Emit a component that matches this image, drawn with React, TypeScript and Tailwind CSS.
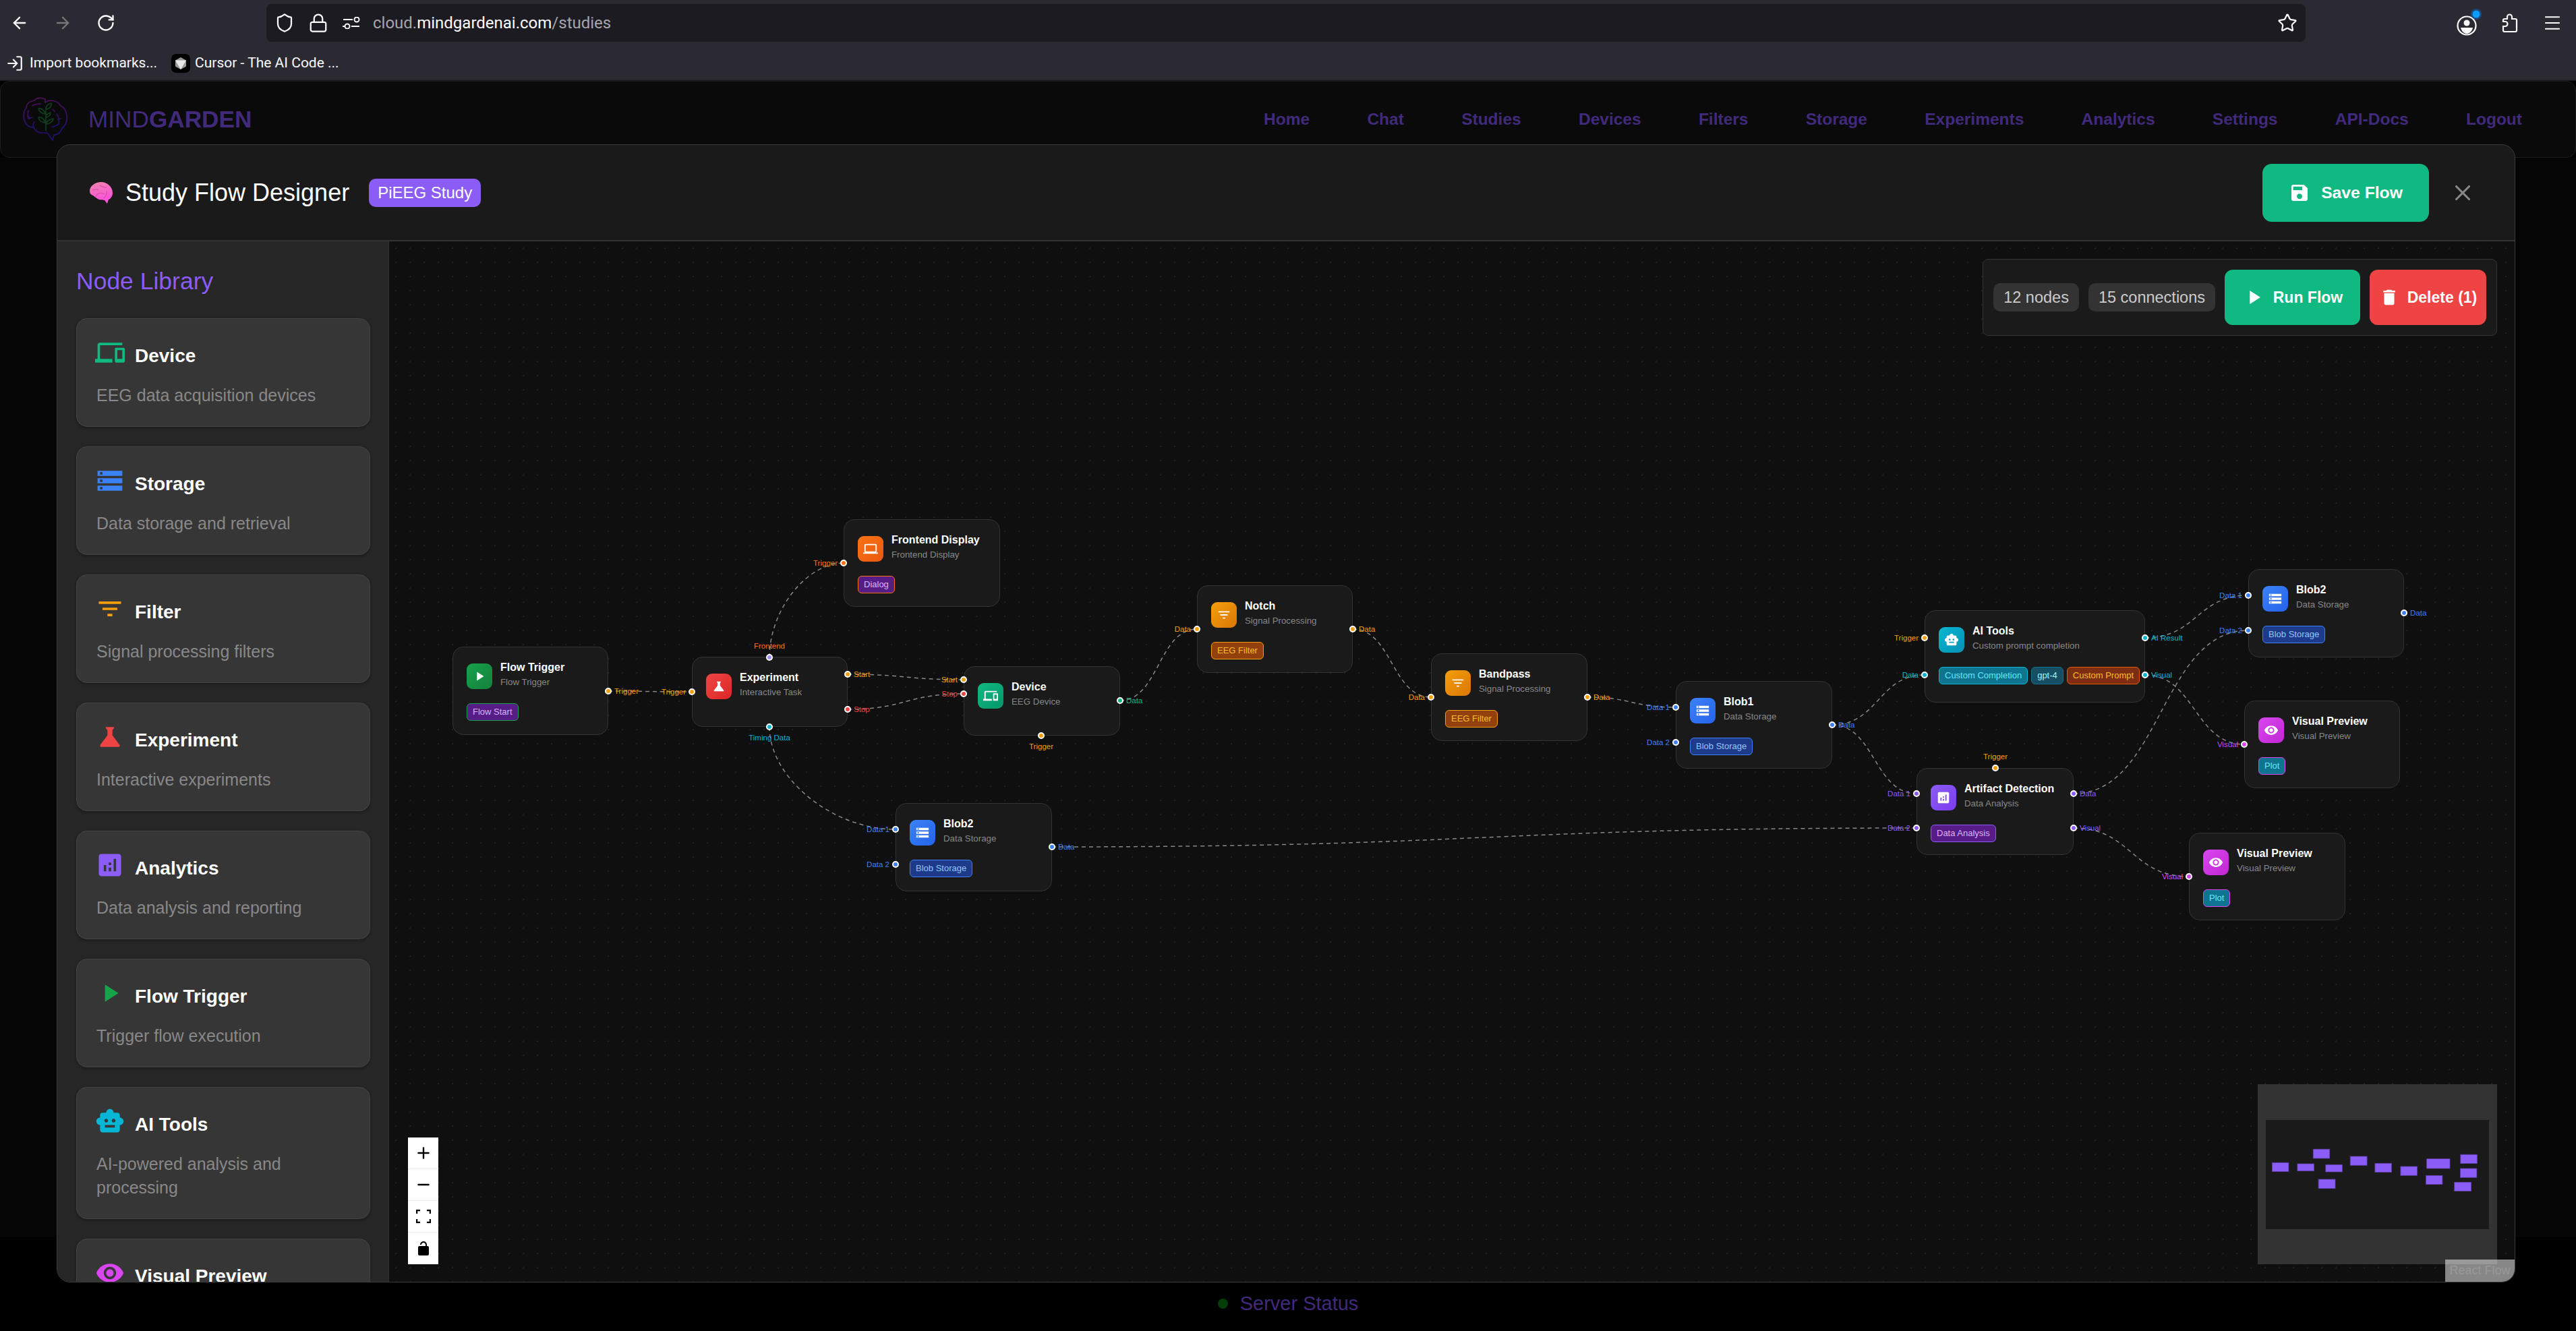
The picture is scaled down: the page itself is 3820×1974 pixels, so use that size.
import { ArrowLeft, ArrowRight, RotateCw, Shield, Lock, Star, Menu, LogIn, X, Plus, Minus } from 'lucide-react'
import {
    MdDevices, MdStorage, MdFilterList, MdScience, MdAnalytics, MdPlayArrow,
    MdSmartToy, MdVisibility, MdComputer, MdSave, MdDelete,
} from 'react-icons/md'
import type { IconType } from 'react-icons'

// page coordinates of the flow canvas
const OX = 577
const OY = 358

type Side = 'left' | 'right' | 'top' | 'bottom'
type Handle = { x: number; y: number; side: Side; label: string; text: string; fill: string }

const ORANGE = 'text-[#f59e0b]'
const BLUE = 'text-[#3b82f6]'
const CYAN = 'text-[#06b6d4]'
const PURPLE = 'text-[#8b5cf6]'
const PINK = 'text-[#d946ef]'

const handles: Record<string, Handle> = {
    ftOut: { x: 902, y: 1025, side: 'right', label: 'Trigger', text: ORANGE, fill: 'bg-[#f59e0b]' },
    expIn: { x: 1026, y: 1026, side: 'left', label: 'Trigger', text: ORANGE, fill: 'bg-[#f59e0b]' },
    expTop: { x: 1141, y: 975, side: 'top', label: 'Frontend', text: 'text-[#f97316]', fill: 'bg-[#a78bfa]' },
    expStart: { x: 1257, y: 1000, side: 'right', label: 'Start', text: ORANGE, fill: 'bg-[#f59e0b]' },
    expStop: { x: 1257, y: 1052, side: 'right', label: 'Stop', text: 'text-[#ef4444]', fill: 'bg-[#ef4444]' },
    expBottom: { x: 1141, y: 1078, side: 'bottom', label: 'Timing Data', text: CYAN, fill: 'bg-[#06b6d4]' },
    feIn: { x: 1251, y: 835, side: 'left', label: 'Trigger', text: 'text-[#f97316]', fill: 'bg-[#f97316]' },
    devStart: { x: 1429, y: 1008, side: 'left', label: 'Start', text: ORANGE, fill: 'bg-[#f59e0b]' },
    devStop: { x: 1429, y: 1029, side: 'left', label: 'Stop', text: 'text-[#ef4444]', fill: 'bg-[#ef4444]' },
    devOut: { x: 1661, y: 1039, side: 'right', label: 'Data', text: 'text-[#10b981]', fill: 'bg-[#10b981]' },
    devTrig: { x: 1544, y: 1091, side: 'bottom', label: 'Trigger', text: ORANGE, fill: 'bg-[#f59e0b]' },
    b2In1: { x: 1328, y: 1230, side: 'left', label: 'Data 1', text: BLUE, fill: 'bg-[#3b82f6]' },
    b2In2: { x: 1328, y: 1282, side: 'left', label: 'Data 2', text: BLUE, fill: 'bg-[#3b82f6]' },
    b2Out: { x: 1560, y: 1256, side: 'right', label: 'Data', text: BLUE, fill: 'bg-[#3b82f6]' },
    notchIn: { x: 1775, y: 933, side: 'left', label: 'Data', text: ORANGE, fill: 'bg-[#f59e0b]' },
    notchOut: { x: 2006, y: 933, side: 'right', label: 'Data', text: ORANGE, fill: 'bg-[#f59e0b]' },
    bandIn: { x: 2122, y: 1034, side: 'left', label: 'Data', text: ORANGE, fill: 'bg-[#f59e0b]' },
    bandOut: { x: 2354, y: 1034, side: 'right', label: 'Data', text: ORANGE, fill: 'bg-[#f59e0b]' },
    b1In1: { x: 2485, y: 1049, side: 'left', label: 'Data 1', text: BLUE, fill: 'bg-[#3b82f6]' },
    b1In2: { x: 2485, y: 1101, side: 'left', label: 'Data 2', text: BLUE, fill: 'bg-[#3b82f6]' },
    b1Out: { x: 2717, y: 1075, side: 'right', label: 'Data', text: BLUE, fill: 'bg-[#3b82f6]' },
    aiTrig: { x: 2854, y: 946, side: 'left', label: 'Trigger', text: ORANGE, fill: 'bg-[#f59e0b]' },
    aiIn: { x: 2854, y: 1001, side: 'left', label: 'Data', text: CYAN, fill: 'bg-[#06b6d4]' },
    aiOut: { x: 3181, y: 946, side: 'right', label: 'AI Result', text: CYAN, fill: 'bg-[#06b6d4]' },
    aiVis: { x: 3181, y: 1001, side: 'right', label: 'Visual', text: CYAN, fill: 'bg-[#06b6d4]' },
    artTrig: { x: 2959, y: 1139, side: 'top', label: 'Trigger', text: ORANGE, fill: 'bg-[#f59e0b]' },
    artIn1: { x: 2842, y: 1177, side: 'left', label: 'Data 1', text: PURPLE, fill: 'bg-[#8b5cf6]' },
    artIn2: { x: 2842, y: 1228, side: 'left', label: 'Data 2', text: PURPLE, fill: 'bg-[#8b5cf6]' },
    artOut: { x: 3075, y: 1177, side: 'right', label: 'Data', text: PURPLE, fill: 'bg-[#8b5cf6]' },
    artVis: { x: 3075, y: 1228, side: 'right', label: 'Visual', text: PURPLE, fill: 'bg-[#8b5cf6]' },
    b3In1: { x: 3334, y: 883, side: 'left', label: 'Data 1', text: BLUE, fill: 'bg-[#3b82f6]' },
    b3In2: { x: 3334, y: 935, side: 'left', label: 'Data 2', text: BLUE, fill: 'bg-[#3b82f6]' },
    b3Out: { x: 3565, y: 909, side: 'right', label: 'Data', text: BLUE, fill: 'bg-[#3b82f6]' },
    vp1In: { x: 3328, y: 1104, side: 'left', label: 'Visual', text: PINK, fill: 'bg-[#d946ef]' },
    vp2In: { x: 3246, y: 1300, side: 'left', label: 'Visual', text: PINK, fill: 'bg-[#d946ef]' },
}

const edges: [string, string][] = [
    ['ftOut', 'expIn'],
    ['expTop', 'feIn'],
    ['expStart', 'devStart'],
    ['expStop', 'devStop'],
    ['expBottom', 'b2In1'],
    ['b2Out', 'artIn2'],
    ['devOut', 'notchIn'],
    ['notchOut', 'bandIn'],
    ['bandOut', 'b1In1'],
    ['b1Out', 'aiIn'],
    ['b1Out', 'artIn1'],
    ['aiOut', 'b3In1'],
    ['artOut', 'b3In2'],
    ['aiVis', 'vp1In'],
    ['artVis', 'vp2In'],
]

const handleLabelClass: Record<Side, string> = {
    left: 'right-[9px] top-1/2 -translate-y-1/2',
    right: 'left-[9px] top-1/2 -translate-y-1/2',
    top: 'bottom-[10px] left-1/2 -translate-x-1/2',
    bottom: 'top-[9px] left-1/2 -translate-x-1/2',
}

// same offset rule as a bezier edge in react flow
function control(h: Handle, o: Handle): [number, number] {
    const off = (d: number) => (d >= 0 ? 0.5 * d : 0.25 * 25 * Math.sqrt(-d))
    if (h.side === 'left') return [h.x - off(h.x - o.x), h.y]
    if (h.side === 'right') return [h.x + off(o.x - h.x), h.y]
    if (h.side === 'top') return [h.x, h.y - off(h.y - o.y)]
    return [h.x, h.y + off(o.y - h.y)]
}

function edgePath(a: Handle, b: Handle) {
    const [c1x, c1y] = control(a, b)
    const [c2x, c2y] = control(b, a)
    return `M${a.x - OX},${a.y - OY} C${c1x - OX},${c1y - OY} ${c2x - OX},${c2y - OY} ${b.x - OX},${b.y - OY}`
}

type Tag = { label: string; cls: string }
type FlowNode = {
    x: number; y: number; w: number; h: number
    title: string; sub: string; icon: IconType; grad: string; tags: Tag[]
}

const GRAD = {
    trigger: 'from-[#16a34a] to-[#15803d]',
    experiment: 'from-[#ef4444] to-[#dc2626]',
    device: 'from-[#10b981] to-[#059669]',
    filter: 'from-[#f59e0b] to-[#d97706]',
    storage: 'from-[#3b82f6] to-[#2563eb]',
    ai: 'from-[#06b6d4] to-[#0891b2]',
    analytics: 'from-[#8b5cf6] to-[#7c3aed]',
    visual: 'from-[#d946ef] to-[#c026d3]',
    frontend: 'from-[#f97316] to-[#ea580c]',
}

const blobTag = { label: 'Blob Storage', cls: 'bg-[#1e3a8a] text-[#93c5fd] border-[#3b82f6]' }
const eegTag = { label: 'EEG Filter', cls: 'bg-[#92400e] text-[#fbbf24] border-[#f59e0b]' }
const plotTag = { label: 'Plot', cls: 'bg-[#0e7490] text-[#67e8f9] border-[#d946ef]' }

const nodes: FlowNode[] = [
    { x: 671, y: 959, w: 231, h: 131, title: 'Flow Trigger', sub: 'Flow Trigger', icon: MdPlayArrow, grad: GRAD.trigger, tags: [{ label: 'Flow Start', cls: 'bg-[#581c87] text-[#d8b4fe] border-[#16a34a]' }] },
    { x: 1026, y: 974, w: 231, h: 104, title: 'Experiment', sub: 'Interactive Task', icon: MdScience, grad: GRAD.experiment, tags: [] },
    { x: 1251, y: 770, w: 232, h: 130, title: 'Frontend Display', sub: 'Frontend Display', icon: MdComputer, grad: GRAD.frontend, tags: [{ label: 'Dialog', cls: 'bg-[#581c87] text-[#d8b4fe] border-[#f97316]' }] },
    { x: 1429, y: 988, w: 232, h: 103, title: 'Device', sub: 'EEG Device', icon: MdDevices, grad: GRAD.device, tags: [] },
    { x: 1328, y: 1191, w: 232, h: 131, title: 'Blob2', sub: 'Data Storage', icon: MdStorage, grad: GRAD.storage, tags: [blobTag] },
    { x: 1775, y: 868, w: 231, h: 130, title: 'Notch', sub: 'Signal Processing', icon: MdFilterList, grad: GRAD.filter, tags: [eegTag] },
    { x: 2122, y: 969, w: 232, h: 130, title: 'Bandpass', sub: 'Signal Processing', icon: MdFilterList, grad: GRAD.filter, tags: [eegTag] },
    { x: 2485, y: 1010, w: 232, h: 130, title: 'Blob1', sub: 'Data Storage', icon: MdStorage, grad: GRAD.storage, tags: [blobTag] },
    {
        x: 2854, y: 905, w: 327, h: 137, title: 'AI Tools', sub: 'Custom prompt completion', icon: MdSmartToy, grad: GRAD.ai,
        tags: [
            { label: 'Custom Completion', cls: 'bg-[#0e7490] text-[#67e8f9] border-[#06b6d4]' },
            { label: 'gpt-4', cls: 'bg-[#164e63] text-[#a5f3fc] border-[#0e7490]' },
            { label: 'Custom Prompt', cls: 'bg-[#7c2d12] text-[#fbbf24] border-[#ea580c]' },
        ],
    },
    { x: 2842, y: 1139, w: 233, h: 129, title: 'Artifact Detection', sub: 'Data Analysis', icon: MdAnalytics, grad: GRAD.analytics, tags: [{ label: 'Data Analysis', cls: 'bg-[#581c87] text-[#d8b4fe] border-[#8b5cf6]' }] },
    { x: 3334, y: 844, w: 231, h: 131, title: 'Blob2', sub: 'Data Storage', icon: MdStorage, grad: GRAD.storage, tags: [blobTag] },
    { x: 3328, y: 1039, w: 231, h: 130, title: 'Visual Preview', sub: 'Visual Preview', icon: MdVisibility, grad: GRAD.visual, tags: [plotTag] },
    { x: 3246, y: 1235, w: 232, h: 130, title: 'Visual Preview', sub: 'Visual Preview', icon: MdVisibility, grad: GRAD.visual, tags: [plotTag] },
]

const library: { title: string; desc?: string; icon: IconType; color: string }[] = [
    { title: 'Device', desc: 'EEG data acquisition devices', icon: MdDevices, color: 'text-[#10b981]' },
    { title: 'Storage', desc: 'Data storage and retrieval', icon: MdStorage, color: 'text-[#3b82f6]' },
    { title: 'Filter', desc: 'Signal processing filters', icon: MdFilterList, color: 'text-[#f59e0b]' },
    { title: 'Experiment', desc: 'Interactive experiments', icon: MdScience, color: 'text-[#ef4444]' },
    { title: 'Analytics', desc: 'Data analysis and reporting', icon: MdAnalytics, color: 'text-[#8b5cf6]' },
    { title: 'Flow Trigger', desc: 'Trigger flow execution', icon: MdPlayArrow, color: 'text-[#16a34a]' },
    { title: 'AI Tools', desc: 'AI-powered analysis and processing', icon: MdSmartToy, color: 'text-[#06b6d4]' },
    { title: 'Visual Preview', icon: MdVisibility, color: 'text-[#d946ef]' },
]

const navLinks = ['Home', 'Chat', 'Studies', 'Devices', 'Filters', 'Storage', 'Experiments', 'Analytics', 'Settings', 'API-Docs', 'Logout']

const miniNodes = [
    [9.4, 63.3, 24.5, 13.3], [46.9, 65, 24.5, 10.7], [70.2, 43.3, 24.5, 13.7], [88.8, 66.3, 24.5, 10.7],
    [78.1, 88, 24.9, 13.7], [125.2, 54, 24.9, 13.3], [161.9, 64.3, 24.5, 13.3], [199.9, 69, 24.5, 13.3],
    [238.6, 57.7, 34.4, 14.3], [288.8, 51.3, 24.5, 13.3], [288.4, 72, 24.5, 13.3], [237.4, 82.3, 24.5, 13.3],
    [279.7, 92.3, 24.9, 13.3],
]

function AccountIcon() {
    return (
        <svg width="40" height="40" viewBox="0 0 40 40" className="-mr-[11px]" fill="none">
            <circle cx="15" cy="25" r="13.500" stroke="#fbfbfe" strokeWidth="2.200" />
            <circle cx="15" cy="21" r="4.500" fill="#fbfbfe" />
            <path d="M6 28h18c-1 5-5 9-9 9s-8-4-9-9z" fill="#fbfbfe" />
            <circle cx="29" cy="8" r="8" fill="#0a84ff" opacity="0.350" />
            <circle cx="29" cy="8" r="5.500" fill="#0a9dff" />
        </svg>
    )
}

function BrowserChrome() {
    return (
        <div className="shrink-0 bg-[#2b2a33] h-[120px] border-b border-[#17161c]">
            <div className="flex items-center h-[68px]">
                <div className="flex items-center w-[395px] pl-[15px] gap-[36px] text-[#fbfbfe]">
                    <ArrowLeft size={28} strokeWidth={2} />
                    <ArrowRight size={28} strokeWidth={2} className="text-[#77767c]" />
                    <RotateCw size={28} strokeWidth={2} />
                </div>
                <div className="flex items-center w-[3024px] h-[56px] rounded-[8px] bg-[#1c1b22] pl-[12px] pr-[12px] text-[#fbfbfe]">
                    <Shield size={30} strokeWidth={1.8} />
                    <Lock size={30} strokeWidth={1.8} className="ml-[20px]" />
                    <svg width="28" height="18" viewBox="0 0 28 18" fill="none" stroke="currentColor" strokeWidth="2" className="ml-[20px]">
                        <path d="M2 4h14M1 14h3M14 14h12" />
                        <circle cx="22" cy="4" r="3.5" />
                        <circle cx="8" cy="14" r="3.5" />
                    </svg>
                    <span className="ml-[18px] text-[24px] font-['Roboto',sans-serif] text-[#a6a5ab]">
                        cloud.<span className="text-[#fbfbfe]">mindgardenai.com</span>/studies
                    </span>
                    <Star size={30} strokeWidth={1.8} className="ml-auto" />
                </div>
                <div className="flex items-center ml-[224px] -mt-[3px] text-[#fbfbfe]">
                    <AccountIcon />
                    <svg width="24" height="28" viewBox="0 0 24 28" fill="none" stroke="currentColor" strokeWidth="2.200" className="ml-[38px] mt-[3px]">
                        <path d="M4 27h16a2 2 0 0 0 2-2V10a2 2 0 0 0-2-2h-5V5a3.500 3.500 0 0 0-7 0v3H4a2 2 0 0 0-2 2v2h3a3.500 3.500 0 0 1 0 7H2v6a2 2 0 0 0 2 2z" />
                    </svg>
                    <Menu size={30} strokeWidth={1.7} className="ml-[36px] mt-[3px]" />
                </div>
            </div>
            <div className="flex items-center h-[51px] text-[21px] font-['Roboto',sans-serif] text-[#fbfbfe]">
                <LogIn size={26} strokeWidth={2} className="ml-[9px]" />
                <span className="ml-[9px]">Import bookmarks...</span>
                <svg width="28" height="28" viewBox="0 0 28 28" className="ml-[21px]">
                    <rect width="28" height="28" rx="7" fill="#000" />
                    <path d="M14 5l8 4.500v9l-8 4.500-8-4.500v-9z" fill="#9a9a9a" />
                    <path d="M6 9.500h16l-8 13.500z" fill="#e8e8e8" />
                </svg>
                <span className="ml-[7px]">Cursor - The AI Code ...</span>
            </div>
        </div>
    )
}

function LogoMark() {
    return (
        <svg width="66" height="66" viewBox="0 0 66 66" fill="none" strokeWidth="1.700" strokeLinecap="round" strokeLinejoin="round">
            <defs>
                <linearGradient id="logoStroke" x1="0" y1="0" x2="0" y2="1">
                    <stop offset="0" stopColor="#4f0f5e" />
                    <stop offset="1" stopColor="#1c0f75" />
                </linearGradient>
            </defs>
            <g stroke="url(#logoStroke)">
                <path d="M33 3C27 0 20 1 17 5 10 6 5 10 5 16 1 20 0 30 3 36c1 5 6 9 13 9 2 5 6 8 13 8h7l8 11 2-8c7 0 11-5 12-10 5-4 8-11 7-19-1-7-5-12-9-14-3-6-10-8-15-8-3 0-6 1-8 3z" />
                <path d="M14 13c4-3 8-3 12-3M8 20c-1 5-1 9 0 12l6-2M7 27l3 5M50 25c3 4 4 10 3 15-3 2-6 4-10 4M56 32l-4 1M17 37c-2 3-3 5-1 8M44 18l3 3" />
            </g>
            <g stroke="#0d3f20">
                <path d="M34 50V17" />
                <path d="M34 18c0-5 4-8 8-9 1 5-3 9-8 9zM33 25c-5 0-9-4-10-8 5-1 9 3 10 8zM34 30c0-4 3-6 7-7 0 4-3 7-7 7zM33 38c-5 0-9-3-10-8 5-1 9 3 10 8zM34 40c1-4 6-8 11-8-1 5-6 8-11 8z" />
            </g>
        </svg>
    )
}

function BackgroundPage() {
    return (
        <div className="flex flex-col h-[1854px]">
            <nav className="flex items-center justify-between shrink-0 h-[114px] pl-[33px] pr-[79px] rounded-[14px] border border-[#1c1c1c] bg-[#0a0a0a] text-[#412a7c]">
                <div className="flex items-center gap-[31px]">
                    <LogoMark />
                    <div className="text-[35.200px]">
                        MIND<span className="font-bold">GARDEN</span>
                    </div>
                </div>
                <div className="flex items-center gap-[85.300px] text-[24.500px] font-bold">
                    {navLinks.map(l => <span key={l}>{l}</span>)}
                </div>
            </nav>
            <main className="flex-1 bg-[#050505]" />
            <footer className="flex items-end justify-center shrink-0 h-[139px] pb-[24px] bg-black text-[#412a7c] text-[29px] leading-[34px]">
                <div className="flex items-center gap-[18px]">
                    <span className="w-[15px] h-[15px] rounded-full bg-[#033d0a]" />
                    <span>Server Status</span>
                </div>
            </footer>
        </div>
    )
}

function LibraryCard({ item }: { item: (typeof library)[number] }) {
    const Icon = item.icon
    return (
        <div className="shrink-0 rounded-[16px] border border-[#444] bg-[#363636] px-[29px] pt-[29px] pb-[28px] shadow-[0_2px_4px_rgba(0,0,0,0.3)]">
            <div className="flex items-center h-[52px] gap-[15px]">
                <Icon size={44} className={`-ml-[2px] -mt-[10px] ${item.color}`} />
                <span className="text-[28px] font-bold text-white">{item.title}</span>
            </div>
            {item.desc && <p className="mt-[15px] text-[25px] leading-[35px] text-[#888]">{item.desc}</p>}
        </div>
    )
}

function Sidebar() {
    return (
        <aside className="shrink-0 w-[492px] overflow-hidden border-r border-[#333] bg-[#262626] pl-[28px] pr-[27px] pt-[38px]">
            <h2 className="text-[35.500px] leading-[42px] text-[#8b5cf6] mb-[34px]">Node Library</h2>
            <div className="flex flex-col gap-[29px]">
                {library.map(item => <LibraryCard key={item.title} item={item} />)}
            </div>
        </aside>
    )
}

function NodeCard({ node }: { node: FlowNode }) {
    const Icon = node.icon
    return (
        <div
            className="absolute rounded-[16px] border border-[#333] bg-[#1a1a1a] px-5 pt-6"
            style={{ left: node.x - OX, top: node.y - OY, width: node.w, height: node.h }}
        >
            <div className="flex items-start gap-3">
                <div className={`flex items-center justify-center shrink-0 w-[38px] h-[38px] rounded-[9px] bg-linear-to-br text-white ${node.grad}`}>
                    <Icon size={22} />
                </div>
                <div className="whitespace-nowrap -mt-[4px]">
                    <div className="text-[16px] leading-[20px] font-bold text-white">{node.title}</div>
                    <div className="mt-[3px] text-[13.300px] leading-[18px] text-[#888]">{node.sub}</div>
                </div>
            </div>
            {node.tags.length > 0 && (
                <div className="flex gap-[5px] mt-[21px]">
                    {node.tags.map(t => (
                        <span key={t.label} className={`h-[26px] rounded-[6px] border px-2 text-[13px] leading-[24px] whitespace-nowrap ${t.cls}`}>
                            {t.label}
                        </span>
                    ))}
                </div>
            )}
        </div>
    )
}

function HandleDot({ h }: { h: Handle }) {
    return (
        <div className="absolute w-0 h-0" style={{ left: h.x - OX, top: h.y - OY }}>
            <span className={`absolute -left-[5px] -top-[5px] w-[10px] h-[10px] rounded-full border-2 border-white ${h.fill}`} />
            <span className={`absolute text-[11.500px] leading-[14px] whitespace-nowrap ${h.text} ${handleLabelClass[h.side]}`}>{h.label}</span>
        </div>
    )
}

function Toolbar() {
    return (
        <div className="absolute right-[26px] top-[26px] flex items-center gap-[14px] rounded-[8px] border border-[#333] bg-[#1a1a1a] p-[15px]">
            <span className="rounded-[10px] bg-[#333] px-[15px] h-[42px] leading-[42px] text-[23.500px] text-[#ccc]">12 nodes</span>
            <span className="rounded-[10px] bg-[#333] px-[15px] h-[42px] leading-[42px] text-[23.500px] text-[#ccc]">15 connections</span>
            <button className="flex items-center justify-center gap-[12px] w-[201px] h-[82px] rounded-[12px] bg-[#10b981] text-[23px] font-bold text-white">
                <MdPlayArrow size={34} />
                Run Flow
            </button>
            <button className="flex items-center justify-center gap-[12px] w-[173px] h-[82px] rounded-[12px] bg-[#ef4444] text-[23px] font-bold text-white">
                <MdDelete size={30} />
                Delete (1)
            </button>
        </div>
    )
}

function ZoomControls() {
    return (
        <div className="absolute left-[28px] bottom-[26px] flex flex-col w-[45px] bg-white text-black divide-y divide-[#eee]">
            <div className="flex items-center justify-center h-[47px]"><Plus size={26} strokeWidth={2.200} /></div>
            <div className="flex items-center justify-center h-[47px]"><Minus size={26} strokeWidth={2.200} /></div>
            <div className="flex items-center justify-center h-[47px]">
                <svg width="22" height="20" viewBox="0 0 22 20" fill="none" stroke="#000" strokeWidth="2.400">
                    <path d="M1 6V1h5M16 1h5v5M21 14v5h-5M6 19H1v-5" />
                </svg>
            </div>
            <div className="flex items-center justify-center h-[47px]">
                <svg width="24" height="24" viewBox="0 0 24 24" fill="#000">
                    <path d="M12 17c1.100 0 2-.9 2-2s-.9-2-2-2-2 .9-2 2 .9 2 2 2zm6-9h-1V6c0-2.760-2.240-5-5-5S7 3.240 7 6h1.900c0-1.710 1.390-3.100 3.100-3.100 1.710 0 3.100 1.390 3.100 3.100v2H6c-1.100 0-2 .9-2 2v10c0 1.100.9 2 2 2h12c1.100 0 2-.9 2-2V10c0-1.100-.9-2-2-2z" />
                </svg>
            </div>
        </div>
    )
}

function MiniMap() {
    return (
        <div className="absolute right-[26px] bottom-[26px] flex items-center justify-center w-[355px] h-[267px] bg-[#333]">
            <svg width="331" height="162" viewBox="0 0 331 162">
                <rect width="331" height="162" fill="#1a1a1a" />
                {miniNodes.map(([x, y, w, h], i) => (
                    <rect key={i} x={x} y={y} width={w} height={h} fill="#8b5cf6" stroke="#5b3fa3" strokeWidth="0.800" />
                ))}
            </svg>
        </div>
    )
}

function FlowCanvas() {
    return (
        <div className="relative flex-1 overflow-hidden bg-[#0f0f0f] bg-[radial-gradient(circle,#232323_1px,transparent_1px)] bg-[length:21px_21px]">
            <svg className="absolute inset-0 w-full h-full" fill="none">
                {edges.map(([a, b]) => (
                    <path key={a + b} d={edgePath(handles[a], handles[b])} stroke="#888" strokeWidth="1.500" strokeDasharray="6 5" />
                ))}
            </svg>
            {nodes.map((n, i) => <NodeCard key={i} node={n} />)}
            {Object.entries(handles).map(([k, h]) => <HandleDot key={k} h={h} />)}
            <Toolbar />
            <ZoomControls />
            <MiniMap />
            <div className="absolute right-0 bottom-0 flex items-center justify-center w-[103px] h-[33px] bg-white/50 text-[18px] text-[#999]">React Flow</div>
        </div>
    )
}

function BrainEmoji() {
    return (
        <svg width="35" height="32" viewBox="0 0 35 32" fill="none">
            <defs>
                <linearGradient id="brainFill" x1="0" y1="0" x2="0.3" y2="1">
                    <stop offset="0" stopColor="#ee85ad" />
                    <stop offset="1" stopColor="#ff4fe0" />
                </linearGradient>
            </defs>
            <path d="M17 0C8 0 0 6 0 13c0 3 1 5 3 6 3 1 5 4 9 6 3 2 7 1 10 2l4 5 2-6c4-2 6-6 6-10C34 7 26 0 17 0z" fill="url(#brainFill)" />
            <path d="M9 22c1-4 5-6 9-6M21 24c3-3 5-7 4-11M15 5c3 2 6 3 10 3M4 12c3-1 6-2 9 0M17 16l5 2" stroke="#d9529c" strokeWidth="1.200" />
        </svg>
    )
}

function Modal() {
    return (
        <div className="absolute left-[84px] top-[214px] flex flex-col w-[3646px] h-[1688px] overflow-hidden rounded-[20px] border border-[#3a3a3a] bg-[#1a1a1a]">
            <header className="flex items-center justify-between shrink-0 h-[143px] border-b-2 border-[#333] pl-[48px] pr-[58px]">
                <div className="flex items-center">
                    <BrainEmoji />
                    <h1 className="ml-[18px] text-[36px] text-white">Study Flow Designer</h1>
                    <span className="ml-[29px] h-[42px] rounded-[10px] bg-[#8b5cf6] px-[13px] leading-[42px] text-[24px] text-white">PiEEG Study</span>
                </div>
                <div className="flex items-center gap-[31px]">
                    <button className="flex items-center justify-center gap-[16px] w-[247px] h-[86px] rounded-[14px] bg-[#10b981] text-[24.700px] font-bold text-white">
                        <MdSave size={32} />
                        Save Flow
                    </button>
                    <X size={38} strokeWidth={2} className="text-[#888]" />
                </div>
            </header>
            <div className="flex flex-1 min-h-0">
                <Sidebar />
                <FlowCanvas />
            </div>
        </div>
    )
}

export default function App() {
    return (
        <div className="relative w-[3820px] h-[1974px] overflow-hidden bg-black font-['Liberation_Sans',Arial,sans-serif]">
            <BrowserChrome />
            <BackgroundPage />
            <Modal />
        </div>
    )
}
